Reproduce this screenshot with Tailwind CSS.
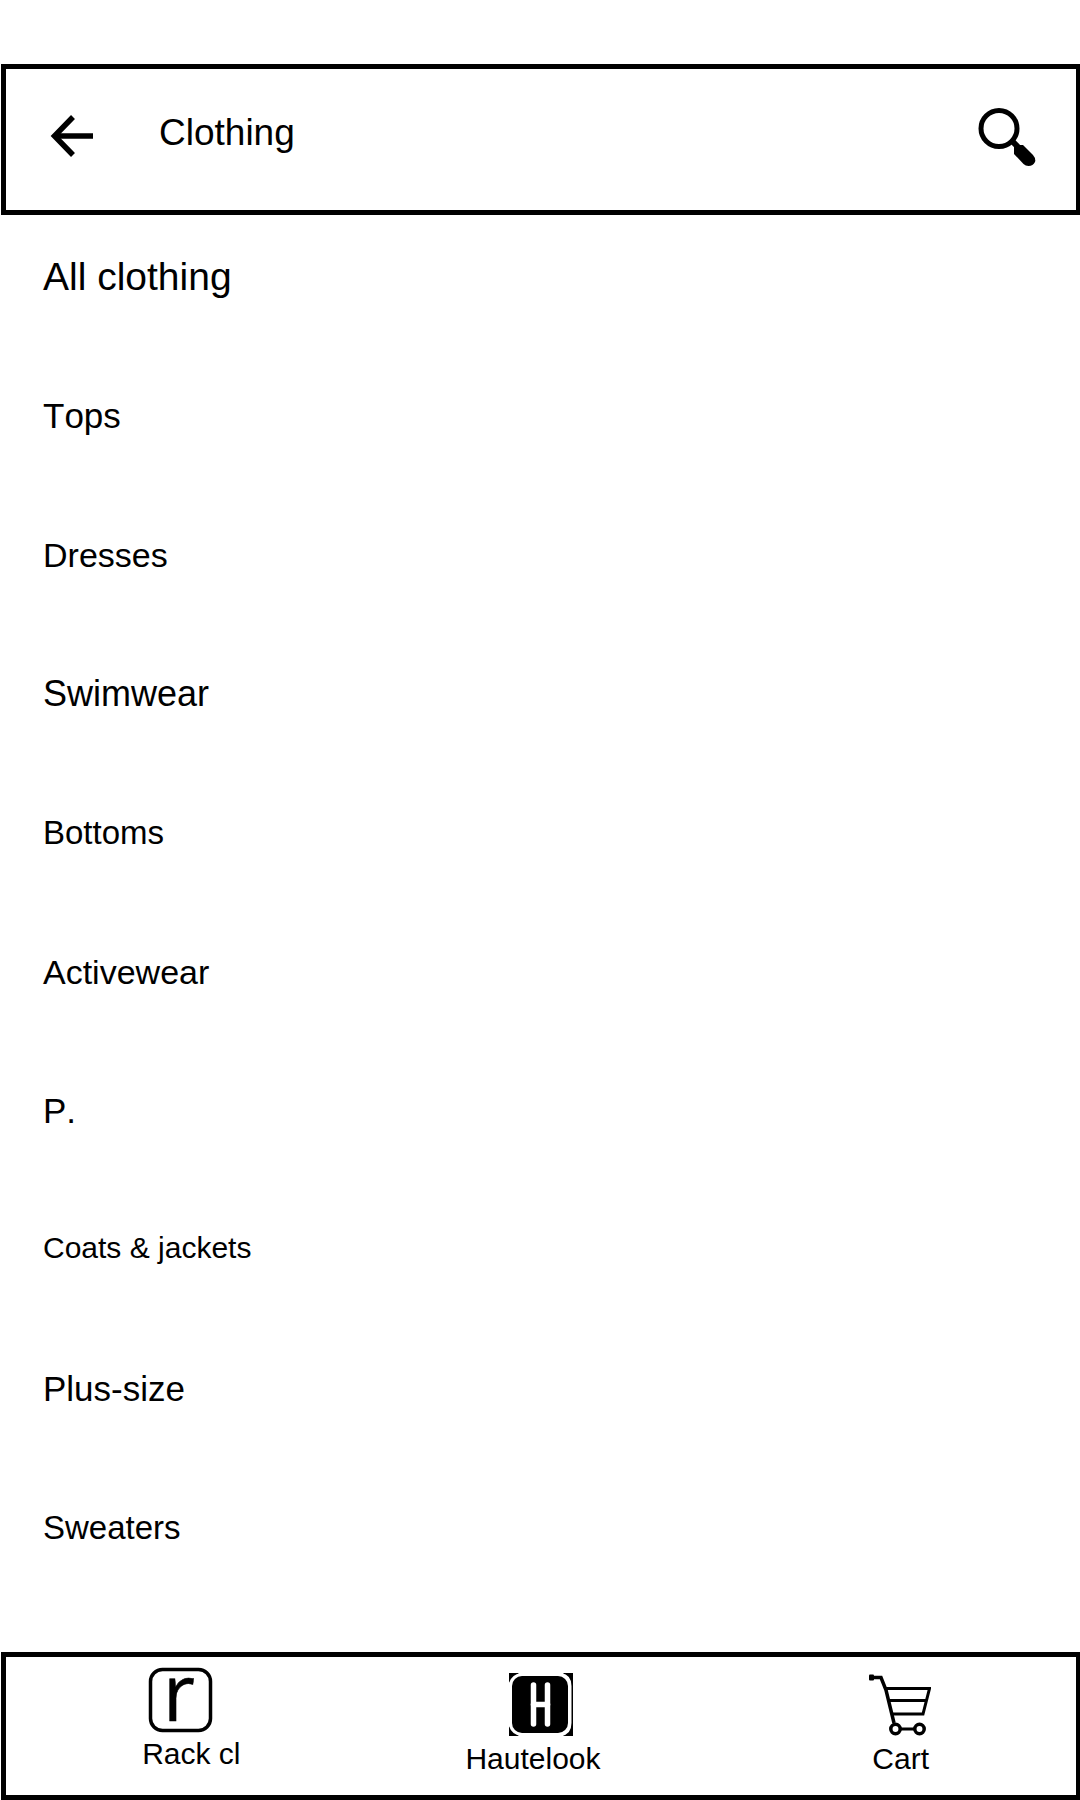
<!DOCTYPE html>
<html lang="en">
<head>
<meta charset="utf-8">
<meta name="viewport" content="width=device-width, initial-scale=1">
<title>Clothing</title>
<script src="https://cdn.jsdelivr.net/npm/@tailwindcss/browser@4"></script>
</head>
<body class="flex min-h-screen flex-col bg-white pt-16 font-['Liberation_Sans',Arial,sans-serif] text-black [font-kerning:none]">
  <header class="ml-px flex h-[151px] items-center border-5 border-r-4 border-black pr-10 pb-1.5 pl-11">
    <button type="button" aria-label="Back" class="shrink-0 pb-0.5">
      <svg class="h-[42px] w-[43px]" viewBox="0 0 43 42" fill="none" stroke="#000" stroke-width="5.500">
        <path d="M23 2 4.500 21 23 40" /><path d="M5 21h38" />
      </svg>
    </button>
    <h1 class="flex-1 pb-2 pl-[66px] text-[37px] leading-[48px]">Clothing</h1>
    <button type="button" aria-label="Search" class="shrink-0">
      <svg class="h-[58px] w-[58px]" viewBox="0 0 58 58" fill="none" stroke="#000">
        <circle cx="21" cy="20.500" r="18" stroke-width="5" />
        <path d="M33 32l7 7" stroke-width="6" />
        <path d="M36 40.500V39l2.500-2h6.500l10 10q3 3.500 2 7-2 4-6.500 4-3 0-5-2L36 46z" fill="#000" stroke="none" />
      </svg>
    </button>
  </header>

  <main class="flex-1 px-[43px] pt-[38px] pb-12">
    <ul class="flex flex-col gap-[91px] text-[35px] leading-[48px]">
      <li><a href="#" class="block text-[39px] leading-[48px]">All clothing</a></li>
      <li><a href="#" class="block">Tops</a></li>
      <li><a href="#" class="block text-[34px] leading-[48px]">Dresses</a></li>
      <li><a href="#" class="block text-[36px] leading-[48px]">Swimwear</a></li>
      <li><a href="#" class="block text-[33px] leading-[48px]">Bottoms</a></li>
      <li><a href="#" class="block text-[34px] leading-[48px]">Activewear</a></li>
      <li><a href="#" class="block">P.</a></li>
      <li><a href="#" class="block pb-1 text-[30px] leading-[44px]">Coats &amp; jackets</a></li>
      <li><a href="#" class="block">Plus-size</a></li>
      <li><a href="#" class="block text-[33px] leading-[48px]">Sweaters</a></li>
    </ul>
  </main>

  <nav class="ml-px grid h-[148px] grid-cols-3 border-5 border-r-4 border-black text-[30px] leading-9">
    <a href="#" class="flex flex-col items-center gap-1 pt-[11px]">
      <svg class="mr-1.5 h-16 w-16 overflow-visible" viewBox="0 0 64 64" aria-hidden="true">
        <rect x="1.500" y="1.500" width="60" height="61" rx="12" fill="none" stroke="#000" stroke-width="3.500" />
        <text x="14" y="53" font-family="Open Sans" font-size="78" stroke="#000" stroke-width="0.500">r</text>
      </svg>
      <span class="pl-3.5">Rack cl</span>
    </a>
    <a href="#" class="flex flex-col items-center gap-1 pt-4">
      <svg class="h-16 w-16" viewBox="0 0 64 64" aria-hidden="true">
        <path d="M0 0h10L0 10zM0 63h10L0 53zM54 0h10v63H54l8-10V10z" />
        <path d="M1 12Q3 3 12 1.500M1 51q2 9 11 10.500M52 1.500Q61 3 61 13v37q0 10-9 11.500" fill="none" stroke="#fff" stroke-width="3" />
        <rect x="3" y="3" width="56" height="57" rx="10" />
        <g stroke="#fff" stroke-width="5.500" stroke-linecap="round">
          <line x1="24.500" y1="12" x2="24.500" y2="51" />
          <line x1="38.500" y1="12" x2="38.500" y2="51" />
          <line x1="24.500" y1="31.500" x2="38.500" y2="31.500" />
        </g>
      </svg>
      <span class="pr-4">Hautelook</span>
    </a>
    <a href="#" class="flex flex-col items-center gap-1 pt-4">
      <svg class="ml-1 h-16 w-[62px]" viewBox="0 0 62 64" fill="none" stroke="#000" stroke-width="3" aria-hidden="true">
        <rect x="0" y="1.500" width="5" height="6" rx="1" fill="#000" stroke="none" />
        <path d="M3 4.500h9L17 17l8 33" stroke-width="3.500" />
        <path d="M16 15.500h44.500L54 41H24M19 27.500h38M31 56h15" />
        <circle cx="26.500" cy="56" r="4.700" stroke-width="3.500" /><circle cx="50.500" cy="56" r="4.700" stroke-width="3.500" />
      </svg>
      <span class="pl-1.5">Cart</span>
    </a>
  </nav>
</body>
</html>
